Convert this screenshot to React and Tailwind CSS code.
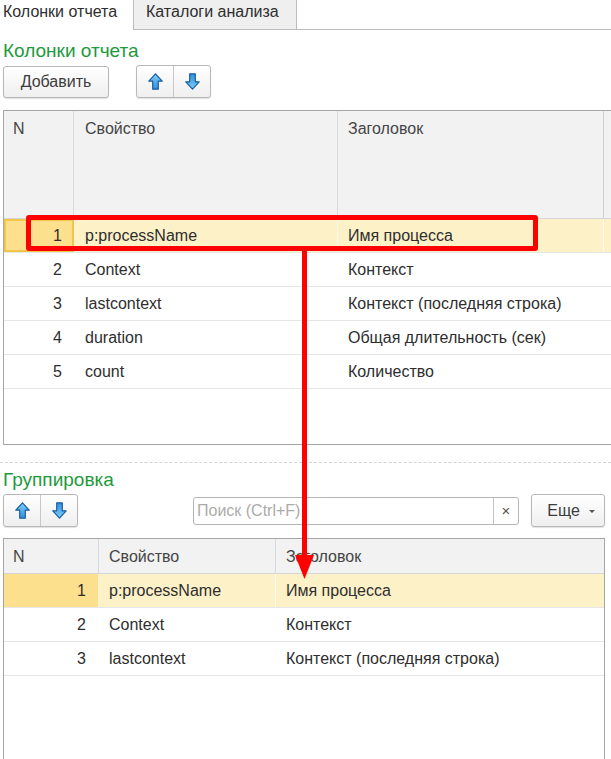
import React from "react";

const topRows = [
  { n: 1, prop: "p:processName", title: "Имя процесса" },
  { n: 2, prop: "Context", title: "Контекст" },
  { n: 3, prop: "lastcontext", title: "Контекст (последняя строка)" },
  { n: 4, prop: "duration", title: "Общая длительность (сек)" },
  { n: 5, prop: "count", title: "Количество" },
];

const groupRows = topRows.slice(0, 3);

function Arrow({ down }) {
  return (
    <svg width="15" height="17" viewBox="0 0 15 17" className={down ? "rotate-180" : ""}>
      <defs>
        <linearGradient id="ab" x1="0" y1="0" x2="0" y2="1">
          <stop offset="0" stopColor="#7fd0fa" />
          <stop offset="1" stopColor="#2f8fdc" />
        </linearGradient>
      </defs>
      <path
        d="M7.5 0.8 L14.2 8.2 L10.3 8.2 L10.3 16.2 L4.7 16.2 L4.7 8.2 L0.8 8.2 Z"
        fill="url(#ab)"
        stroke="#1b5e9e"
        strokeWidth="1.2"
        strokeLinejoin="round"
      />
    </svg>
  );
}

function MoveButtons() {
  return (
    <div className="flex h-[33px] w-[75px] rounded-[3px] border border-[#b8b8b8] bg-gradient-to-b from-white to-[#efefef] shadow-[0_1px_1px_rgba(0,0,0,0.12)]">
      <div className="flex flex-1 items-center justify-center border-r border-[#c8c8c8]">
        <Arrow />
      </div>
      <div className="flex flex-1 items-center justify-center">
        <Arrow down />
      </div>
    </div>
  );
}

export default function App() {
  return (
    <div className="relative h-[759px] w-[611px] overflow-hidden bg-white font-['Liberation_Sans',Arial,sans-serif] text-[16px] leading-[19px] text-[#2e2e2e]">
      {/* tabs */}
      <div className="flex h-[30px]">
        <div className="w-[133px] pl-[3px] pt-[2px] text-[#2e2e2e]">Колонки отчета</div>
        <div className="w-[164px] border-x border-b border-[#bcbcbc] bg-[#efefef] pl-[12px] pt-[2px] text-[#2e2e2e]">
          Каталоги анализа
        </div>
        <div className="flex-1 border-b border-[#bcbcbc]" />
      </div>

      <div className="mt-[10px] pl-[3px] text-[19px] leading-[22px] text-[#1e9a3c]">Колонки отчета</div>

      <div className="mt-[3px] flex items-center pl-[3px]">
        <div className="flex h-[32px] w-[106px] items-center justify-center rounded-[3px] border border-[#b8b8b8] bg-gradient-to-b from-white to-[#efefef] text-[#3c3c3c] shadow-[0_1px_1px_rgba(0,0,0,0.12)]">
          Добавить
        </div>
        <div className="ml-[27px]">
          <MoveButtons />
        </div>
      </div>

      {/* top table */}
      <div className="ml-[3px] mt-[12px] flex h-[335px] flex-col border-b border-l border-t border-[#a6a6a6]">
        <div className="flex h-[108px] border-b border-[#d6d6d6] bg-[#f2f2f2] text-[#454545]">
          <div className="w-[70px] border-r border-[#d9d9d9] pl-[9px] pt-[8px]">N</div>
          <div className="w-[264px] border-r border-[#d9d9d9] pl-[11px] pt-[8px]">Свойство</div>
          <div className="w-[266px] border-r border-[#cfcfcf] pl-[10px] pt-[8px]">Заголовок</div>
          <div className="flex-1" />
        </div>
        {topRows.map((r, i) => (
          <div
            key={r.n}
            className={
              i === 0
                ? "flex h-[34px] border-b border-[#e6e6e6] bg-[#fdf1c8]"
                : "flex h-[34px] border-b border-[#e6e6e6]"
            }
          >
            <div
              className={
                i === 0
                  ? "flex w-[70px] items-center justify-end border-2 border-[#f2c64a] bg-[#fde08e] pr-[10px]"
                  : "flex w-[70px] items-center justify-end pr-[12px]"
              }
            >
              {r.n}
            </div>
            <div className={i === 0 ? "flex w-[264px] items-center border-r border-[#fbf7e8] pl-[11px]" : "flex w-[264px] items-center pl-[11px]"}>
              {r.prop}
            </div>
            <div className={i === 0 ? "flex w-[266px] items-center border-r border-[#fffaf0] pl-[10px]" : "flex w-[266px] items-center pl-[10px]"}>
              {r.title}
            </div>
            <div className="flex-1" />
          </div>
        ))}
      </div>

      <div className="mt-[17px] border-t border-dashed border-[#d4d4d4]" />

      <div className="mt-[6px] pl-[3px] text-[19px] leading-[22px] text-[#1e9a3c]">Группировка</div>

      <div className="mt-[3px] flex items-center pl-[3px]">
        <MoveButtons />
        <div className="ml-[115px] flex h-[28px] w-[326px] items-center rounded-[3px] border border-[#b5b5b5] bg-white">
          <span className="flex-1 pl-[3px] text-[#ababab]">Поиск (Ctrl+F)</span>
          <span className="flex h-full w-[25px] items-center justify-center border-l border-[#c4c4c4] text-[15px] text-[#555]">
            ×
          </span>
        </div>
        <div className="ml-[12px] flex h-[33px] w-[74px] items-center justify-center gap-[9px] rounded-[3px] border border-[#b8b8b8] bg-gradient-to-b from-white to-[#efefef] pl-[6px] text-[#3c3c3c] shadow-[0_1px_1px_rgba(0,0,0,0.12)]">
          <span>Еще</span>
          <span className="mt-[1px] h-0 w-0 border-x-[3px] border-t-[3px] border-x-transparent border-t-[#555]" />
        </div>
      </div>

      {/* grouping table */}
      <div className="ml-[3px] mt-[11px] h-[240px] w-[602px] border-l border-r border-t border-[#a6a6a6]">
        <div className="flex h-[35px] border-b border-[#d6d6d6] bg-[#f2f2f2] text-[#454545]">
          <div className="flex w-[95px] items-center border-r border-[#d9d9d9] pl-[9px]">N</div>
          <div className="flex w-[177px] items-center border-r border-[#d9d9d9] pl-[10px]">Свойство</div>
          <div className="flex flex-1 items-center pl-[10px]">Заголовок</div>
        </div>
        {groupRows.map((r, i) => (
          <div
            key={r.n}
            className={
              i === 0
                ? "flex h-[34px] border-b border-[#e6e6e6] bg-[#fdf1c8]"
                : "flex h-[34px] border-b border-[#e6e6e6]"
            }
          >
            <div
              className={
                i === 0
                  ? "flex w-[95px] items-center justify-end border-r border-[#fbf3d8] bg-[#fde08e] pr-[12px]"
                  : "flex w-[95px] items-center justify-end pr-[13px]"
              }
            >
              {r.n}
            </div>
            <div className={i === 0 ? "flex w-[177px] items-center border-r border-[#fffaf0] pl-[10px]" : "flex w-[177px] items-center pl-[10px]"}>
              {r.prop}
            </div>
            <div className="flex flex-1 items-center pl-[10px]">{r.title}</div>
          </div>
        ))}
      </div>

      {/* red annotation */}
      <div className="absolute left-[26px] top-[215px] h-[36px] w-[512px] rounded-[3px] border-[5px] border-[#ff0000]" />
      <div className="absolute left-[302px] top-[250px] h-[306px] w-[5px] bg-[#ff0000]" />
      <svg className="absolute left-[294px] top-[554px]" width="21" height="26" viewBox="0 0 21 26">
        <polygon points="1,1 20,1 10.5,25" fill="#ff0000" />
      </svg>
    </div>
  );
}
